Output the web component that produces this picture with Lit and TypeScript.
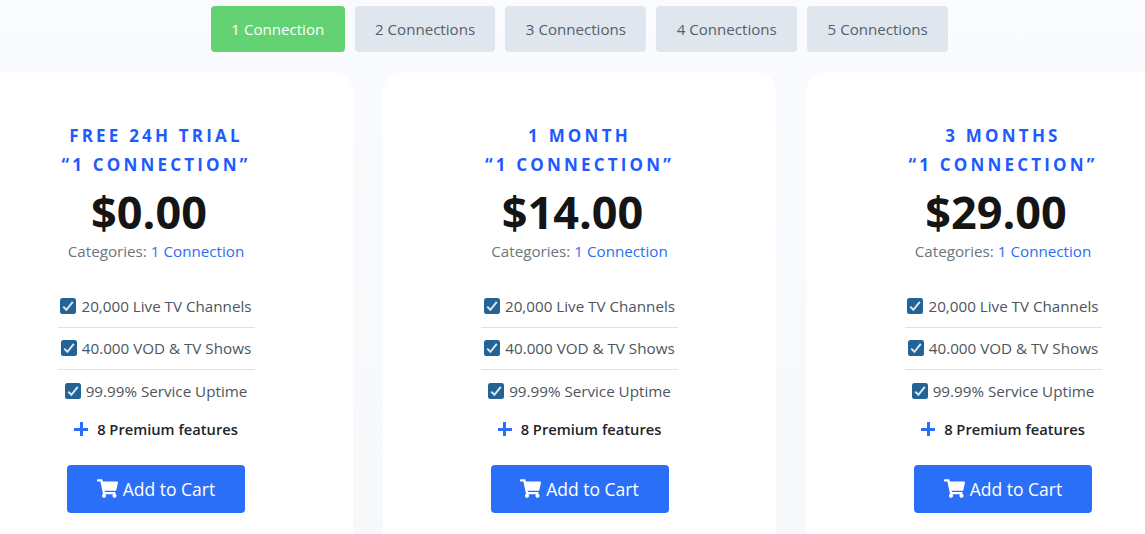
import { LitElement, html, css, svg } from "lit"
import { customElement } from "lit/decorators.js"

const tabs = ["1 Connection", "2 Connections", "3 Connections", "4 Connections", "5 Connections"]

const plans = [
   { title: "FREE 24H TRIAL", price: "$0.00" },
   { title: "1 MONTH", price: "$14.00" },
   { title: "3 MONTHS", price: "$29.00" },
]

const features = ["20,000 Live TV Channels", "40.000 VOD & TV Shows", "99.99% Service Uptime"]

const checkIcon = svg`<svg class="check" viewBox="0 0 16 16"><rect width="16" height="16" rx="2.5" fill="#236396"/><path d="M3.2 8.6 6.400 11.8 12.8 3.900" fill="none" stroke="#dbe8f2" stroke-width="2"/></svg>`
const cartIcon = svg`<svg class="cart" viewBox="0 0 576 512"><path fill="#fff" d="M528 301.3l47.3-208C578.700 78.300 567.300 64 552 64H159.200l-9.200-44.800C147.800 8 137.900 0 126.500 0H24C10.700 0 0 10.700 0 24v16c0 13.300 10.700 24 24 24h69.900l70.200 343.400C147.300 417.100 136 435.200 136 456c0 30.900 25.100 56 56 56s56-25.100 56-56c0-15.700-6.400-29.800-16.800-40h209.600C430.400 426.200 424 440.300 424 456c0 30.900 25.100 56 56 56s56-25.100 56-56c0-22.200-12.900-41.300-31.600-50.400l5.500-24.300c3.400-15-8-29.300-23.400-29.300H218.100l-6.500-32h293c11.200 0 20.900-7.800 23.400-18.700z"/></svg>`

@customElement("app-root")
export class AppRoot extends LitElement {
   render() {
      return html`
         <div class="page">
            <div class="tabs">
               ${tabs.map((t, i) => html`<div class="tab ${i === 0 ? "on" : ""}">${t}</div>`)}
            </div>
            <div class="cards">
               ${plans.map(p => html`
                  <div class="card">
                     <div class="head">${p.title}<br />“1 CONNECTION”</div>
                     <div class="price">${p.price}</div>
                     <div class="cats">Categories: <a>1 Connection</a></div>
                     <ul>
                        ${features.map(f => html`<li>${checkIcon}<span>${f}</span></li>`)}
                     </ul>
                     <div class="more"><span class="plus"></span><span>8 Premium features</span></div>
                     <div class="btn">${cartIcon}Add to Cart</div>
                  </div>
               `)}
            </div>
         </div>
      `
   }

   static styles = css`
      :host {
         display: block;
         height: 534px;
         overflow: hidden;
         font-family: "Open Sans", "Noto Sans", sans-serif;
      }
      .page {
         height: 534px;
         background: linear-gradient(#fafbfe, #f7f8fa);
         overflow: hidden;
      }
      .tabs {
         display: flex;
         justify-content: center;
         gap: 10px;
         padding-top: 6px;
         margin-left: 14px;
      }
      .tab {
         height: 46px;
         line-height: 46px;
         padding: 0 20.4px;
         border-radius: 4px;
         font-size: 15.1px;
         background: #e0e6ed;
         color: #565e6c;
      }
      .tab.on {
         background: #62d273;
         color: #fff;
      }
      .cards {
         display: flex;
         gap: 30px;
         margin: 20px 0 0 -40.75px;
      }
      .card {
         width: 393.5px;
         flex: none;
         height: 480px;
         background: #fff;
         border-radius: 20px;
         text-align: center;
         padding-top: 49px;
         box-sizing: border-box;
      }
      .head {
         color: #1e5bff;
         font-weight: 700;
         font-size: 17px;
         letter-spacing: 3.2px;
         line-height: 29px;
      }
      .price {
         color: #151515;
         font-weight: 700;
         font-size: 45px;
         line-height: 62px;
         margin: 2px 14px -2px 0;
      }
      .cats {
         color: #6c757d;
         font-size: 15.2px;
         line-height: 20px;
      }
      .cats a {
         color: #2b6ff0;
      }
      ul {
         list-style: none;
         margin: 24.2px auto 0;
         padding: 0;
         width: 197px;
      }
      li {
         display: flex;
         align-items: center;
         justify-content: center;
         white-space: nowrap;
         height: 42.5px;
         font-size: 15.2px;
         color: #4c5560;
         border-bottom: 1px solid #dee2e6;
         box-sizing: border-box;
      }
      li:last-child {
         border-bottom: none;
      }
      .check {
         width: 16px;
         height: 16px;
         margin-right: 5px;
         flex: none;
      }
      .more {
         display: flex;
         align-items: center;
         justify-content: center;
         font-size: 14.7px;
         font-weight: 600;
         color: #212529;
         height: 33px;
      }
      .plus {
         width: 14px;
         height: 14px;
         margin-right: 9px;
         background:
            linear-gradient(#2b6ff8, #2b6ff8) center / 14px 3px no-repeat,
            linear-gradient(#2b6ff8, #2b6ff8) center / 3px 14px no-repeat;
      }
      .btn {
         display: inline-flex;
         align-items: center;
         justify-content: center;
         margin-top: 19.2px;
         width: 178px;
         height: 48px;
         border-radius: 4px;
         background: #2b6ff8;
         color: #fff;
         font-size: 17.5px;
      }
      .cart {
         width: 21px;
         height: 19px;
         margin-right: 5px;
      }
   `
}

declare global {
   interface HTMLElementTagNameMap {
      "app-root": AppRoot
   }
}
